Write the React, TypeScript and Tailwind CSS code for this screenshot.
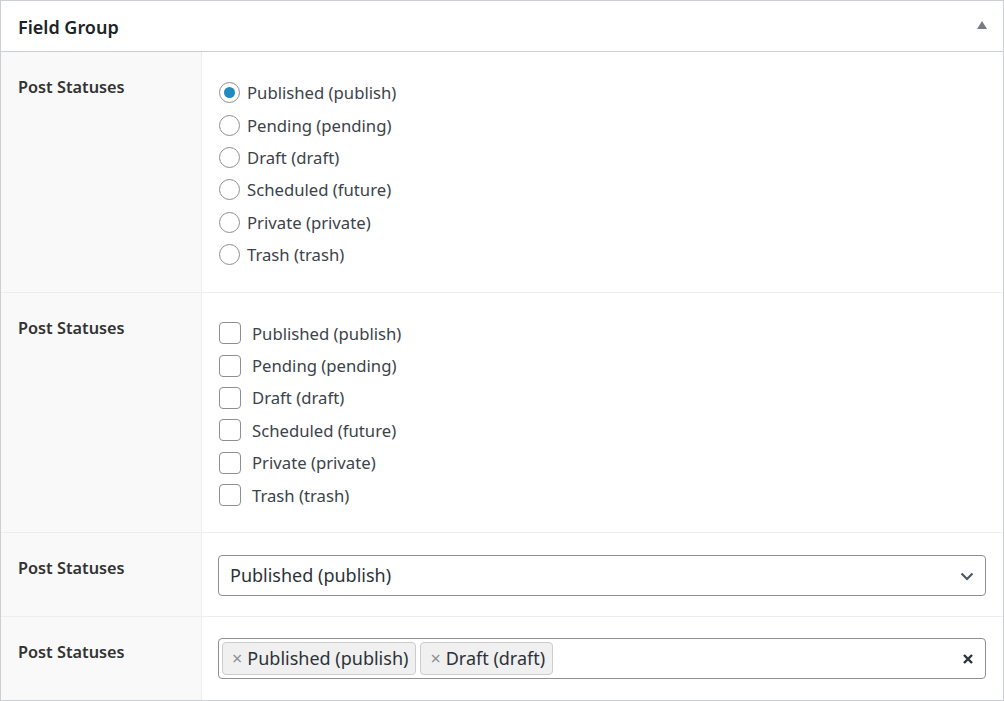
import React from "react";

const items = [
  "Published (publish)",
  "Pending (pending)",
  "Draft (draft)",
  "Scheduled (future)",
  "Private (private)",
  "Trash (trash)",
];

function Label() {
  return (
    <div className="w-[201px] shrink-0 bg-[#f9f9f9] border-r border-[#eeeeee] pl-[17px] pt-[25px]">
      <div className="text-[16.3px] leading-[20px] font-semibold text-[#333333]">Post Statuses</div>
    </div>
  );
}

export default function App() {
  return (
    <div
      className="w-[1004px] h-[701px] bg-white border border-[#ccd0d4] flex flex-col text-[#333333]"
      style={{ fontFamily: '"Noto Sans", "Open Sans", sans-serif' }}
    >
      <div className="h-[51px] shrink-0 border-b border-[#ccd0d4] flex items-center justify-between pl-[17px] pr-[16px]">
        <div className="text-[18px] font-semibold text-[#1d2327] mt-[3px]">Field Group</div>
        <svg width="10" height="8" viewBox="0 0 10 8" className="mt-[-2px]">
          <polygon points="5,0 10,8 0,8" fill="#787c82" />
        </svg>
      </div>

      <div className="h-[241px] shrink-0 flex border-b border-[#eeeeee]">
        <Label />
        <div className="flex-1 pl-[17px] pt-[24.5px]">
          {items.map((t, i) => (
            <div key={t} className="h-[32.4px] flex items-center">
              <span className="w-[21px] h-[21px] rounded-full border border-[#8c8f94] bg-white flex items-center justify-center shrink-0">
                {i === 0 && <span className="w-[11px] h-[11px] rounded-full bg-[#1e8cbe]" />}
              </span>
              <span className="ml-[7px] text-[16.7px] text-[#3c434a]">{t}</span>
            </div>
          ))}
        </div>
      </div>

      <div className="h-[240px] shrink-0 flex border-b border-[#eeeeee]">
        <Label />
        <div className="flex-1 pl-[17px] pt-[24px]">
          {items.map((t) => (
            <div key={t} className="h-[32.4px] flex items-center">
              <span className="w-[22px] h-[22px] rounded-[4px] border border-[#8c8f94] bg-white shrink-0" />
              <span className="ml-[11px] text-[16.7px] text-[#3c434a]">{t}</span>
            </div>
          ))}
        </div>
      </div>

      <div className="h-[84px] shrink-0 flex border-b border-[#eeeeee]">
        <Label />
        <div className="flex-1 pl-[16px] pr-[17px] pt-[22px]">
          <div className="h-[41px] rounded-[4px] border border-[#8c8f94] flex items-center justify-between pl-[11px] pr-[10px]">
            <span className="text-[18px] text-[#2c3338]">Published (publish)</span>
            <svg width="16" height="16" viewBox="0 0 16 16">
              <path d="M2.5 5.5 L8 11 L13.5 5.5" fill="none" stroke="#50575e" strokeWidth="2.2" />
            </svg>
          </div>
        </div>
      </div>

      <div className="flex-1 flex">
        <Label />
        <div className="flex-1 pl-[16px] pr-[17px] pt-[21px]">
          <div className="h-[41px] rounded-[4px] border border-[#8c8f94] flex items-center pl-[3px] pr-[11px]">
            <div className="flex gap-[4px]">
              {["Published (publish)", "Draft (draft)"].map((t) => (
                <span
                  key={t}
                  className="h-[33px] rounded-[4px] border border-[#cccccc] bg-[#f0f0f0] flex items-center pl-[9px] pr-[7px] text-[18px] text-[#2c3338]"
                >
                  <span className="text-[#8c8f94] text-[18px] mr-[5px]">×</span>
                  {t}
                </span>
              ))}
            </div>
            <div className="flex-1" />
            <svg width="12" height="12" viewBox="0 0 12 12">
              <path d="M2 2 L10 10 M10 2 L2 10" stroke="#2c3338" strokeWidth="2.4" />
            </svg>
          </div>
        </div>
      </div>
    </div>
  );
}
